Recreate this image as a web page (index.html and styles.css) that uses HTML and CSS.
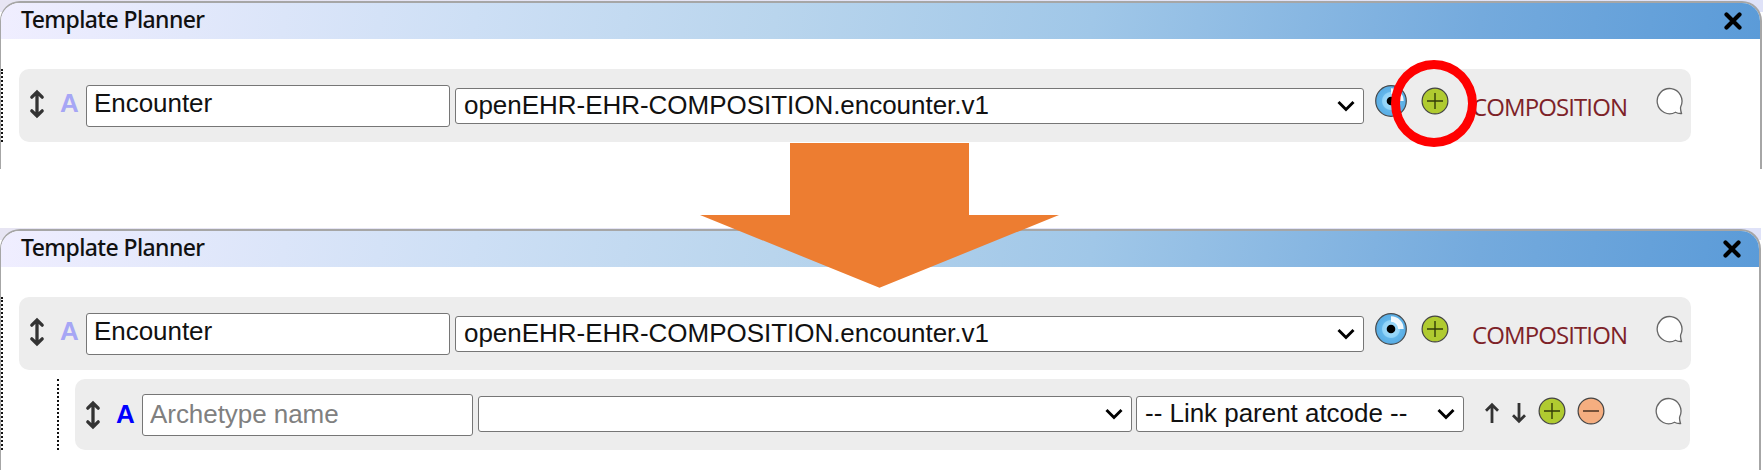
FILE: index.html
```html
<!DOCTYPE html>
<html lang="en">
<head>
<meta charset="utf-8">
<title>Template Planner</title>
<link rel="stylesheet" href="styles.css">
</head>
<body>
<svg class="defs" width="0" height="0">
  <defs>
    <radialGradient id="iris">
      <stop offset="0" stop-color="#a9e0fb"/><stop offset=".55" stop-color="#8fd3f8"/>
      <stop offset=".62" stop-color="#62b6ea"/><stop offset="1" stop-color="#58ace4"/>
    </radialGradient>
    <symbol id="move" viewBox="0 0 16 30"><path d="M8 4V26M2.800 8.200 8 3l5.200 5.200M2.800 21.800 8 27l5.200-5.200" fill="none" stroke="#333" stroke-width="3.300" stroke-linecap="round"/></symbol>
    <symbol id="chevron" viewBox="0 0 18 12"><path d="M1.500 2 9 9.500 16.500 2" fill="none" stroke="#000" stroke-width="2.900"/></symbol>
    <symbol id="eye" viewBox="0 0 34 34"><circle cx="17" cy="17" r="15.300" fill="url(#iris)" stroke="#45494c" stroke-width="1.200"/><path d="M17 4.300A12.700 12.700 0 0 1 29.700 17h-5.500A7.200 7.200 0 0 0 17 9.800Z" fill="#fff" opacity=".9"/><circle cx="17" cy="17" r="4.300"/></symbol>
    <symbol id="plus" viewBox="0 0 28 28"><circle cx="14" cy="14" r="12.900" fill="#b0cb30" stroke="#444" stroke-width="1.200"/><path d="M14 6v16M6 14h16" stroke="#333c08" stroke-width="1.400"/></symbol>
    <symbol id="minus" viewBox="0 0 28 28"><circle cx="14" cy="14" r="12.900" fill="#f5ae80" stroke="#444" stroke-width="1.200"/><path d="M6 14h16" stroke="#4a3020" stroke-width="1.500"/></symbol>
    <symbol id="bubble" viewBox="0 0 28 30"><path d="M19.500 26.200A12.400 12.600 0 1 1 24.800 20.500Q24 22.500 25.500 27.500 22 27.700 19.500 26.200Z" fill="#fff" stroke="#666" stroke-width="1.300"/></symbol>
    <symbol id="up" viewBox="0 0 16 22"><path d="M8 21V3M2 8.700 8 2.700l6 6" fill="none" stroke="#333" stroke-width="2.800"/></symbol>
    <symbol id="close" viewBox="0 0 18 18"><path d="M2.500 2.500l13 13M15.500 2.500l-13 13" stroke="#000" stroke-width="4.200" stroke-linecap="round"/></symbol>
  </defs>
</svg>

<main class="page">
  <section class="shot">
    <div class="panel">
      <header class="bar"><h1 class="title">Template Planner</h1><svg class="close"><use href="#close"/></svg></header>
      <div class="tree">
        <div class="row">
          <svg class="move"><use href="#move"/></svg>
          <span class="letter faded">A</span>
          <input class="name" value="Encounter">
          <div class="select wide"><span>openEHR-EHR-COMPOSITION.encounter.v1</span><svg class="chevron"><use href="#chevron"/></svg></div>
          <svg class="eye"><use href="#eye"/></svg>
          <svg class="plus"><use href="#plus"/></svg>
          <span class="kind">COMPOSITION</span>
          <svg class="bubble"><use href="#bubble"/></svg>
        </div>
      </div>
    </div>
  </section>

  <section class="shot second">
    <div class="panel">
      <header class="bar"><h1 class="title">Template Planner</h1><svg class="close"><use href="#close"/></svg></header>
      <div class="tree">
        <div class="row">
          <svg class="move"><use href="#move"/></svg>
          <span class="letter faded">A</span>
          <input class="name" value="Encounter">
          <div class="select wide"><span>openEHR-EHR-COMPOSITION.encounter.v1</span><svg class="chevron"><use href="#chevron"/></svg></div>
          <svg class="eye"><use href="#eye"/></svg>
          <svg class="plus"><use href="#plus"/></svg>
          <span class="kind">COMPOSITION</span>
          <svg class="bubble"><use href="#bubble"/></svg>
        </div>
        <div class="branch">
          <div class="row child">
            <svg class="move"><use href="#move"/></svg>
            <span class="letter">A</span>
            <input class="name" placeholder="Archetype name">
            <div class="select archetype"><svg class="chevron"><use href="#chevron"/></svg></div>
            <div class="select link"><span>-- Link parent atcode --</span><svg class="chevron"><use href="#chevron"/></svg></div>
            <svg class="arrow first"><use href="#up"/></svg>
            <svg class="arrow down"><use href="#up"/></svg>
            <svg class="plus"><use href="#plus"/></svg>
            <svg class="minus"><use href="#minus"/></svg>
            <svg class="bubble"><use href="#bubble"/></svg>
          </div>
        </div>
      </div>
    </div>
  </section>

  <svg class="flow-arrow" viewBox="0 0 360 145"><path d="M90 0H269V72H359L179.500 144.700 0 72H90Z" fill="#ed7d31"/></svg>
  <div class="ring"></div>
</main>
</body>
</html>
```

FILE: styles.css
```css
* { box-sizing: border-box; }
body { margin: 0; background: #fff; font-family: "Liberation Sans", Arial, sans-serif; }
svg { display: block; flex: none; }
.defs { position: absolute; }
.page { position: relative; width: 1763px; height: 470px; overflow: hidden; }

.shot { height: 169px; overflow: hidden; background: linear-gradient(90deg, #e7e5f3, #dfe2f8) 0 0 / 100% 12px no-repeat; padding-top: 1px; }
.shot.second { margin-top: 59px; height: 242px; width: 1761px; }
.panel { width: 1762px; height: 260px; border: 2px solid #a6a6a6; border-left-width: 1px; border-radius: 20px 20px 0 0; background: #fff; overflow: hidden; }
.second .panel { width: 1761px; }

.bar { height: 36px; display: flex; align-items: center; justify-content: space-between; padding: 0 18px 0 20px;
  background: linear-gradient(100deg, #f0eeff 0%, #cddff5 27%, #b9d5ed 44%, #a0c7e8 62%, #74aadd 84%, #5b9bd8 100%); }
.title { margin: 0 0 5px; font: 500 23px/30px "Noto Sans", sans-serif; letter-spacing: -.6px; color: #111; }
.close { width: 18px; height: 18px; }

.tree { margin-top: 30px; border-left: 2px dotted #111; }
.row { display: flex; align-items: flex-start; width: 1672px; height: 73px; margin-left: 16px; padding-left: 10px; border-radius: 10px; background: #ededed; }
.branch { margin: 9px 0 0 54px; border-left: 2px dotted #111; }
.row.child { width: 1615px; height: 71px; }

.move { width: 16px; height: 30px; margin-top: 20px; }
.letter { width: 19px; margin: 19px 0 0 15px; font-weight: bold; font-size: 26px; line-height: 30px; color: #00f; }
.faded { color: #a6a6f5; }
.name { width: 364px; height: 42px; margin: 16px 0 0 7px; padding: 0 7px 5px; border: 1.500px solid #767676; border-radius: 3px; background: #fff; color: #111; font: 26px/34px "Liberation Sans", Arial, sans-serif; letter-spacing: -.05px; }
.name::placeholder { color: #808080; }
.select { display: flex; align-items: center; justify-content: space-between; height: 36px; margin: 19px 0 0 5px; padding: 0 8px; border: 1.500px solid #767676; border-radius: 3px; background: #fff; color: #111; font-size: 26px; line-height: 32px; letter-spacing: -.03px; white-space: nowrap; }
.select span { margin-bottom: 2px; }
.wide { width: 909px; }
.chevron { width: 18px; height: 12px; margin-left: auto; }
.eye { width: 34px; height: 34px; margin: 15px 0 0 10px; }
.plus, .minus { width: 28px; height: 28px; margin: 18px 0 0 13px; }
.kind { width: 156px; margin: 22px 0 0 23px; font: 24px/32px "Open Sans", sans-serif; letter-spacing: -.9px; color: #7d2228; }
.bubble { width: 28px; height: 30px; margin: 17px 7px 0 auto; }

.child .move { margin-top: 21px; }
.child .letter { margin-top: 20px; }
.child .name { width: 331px; margin-top: 15px; padding-bottom: 2px; }
.child .select { margin-top: 17px; }
.child .archetype { width: 654px; }
.child .link { width: 328px; margin-left: 4px; }
.arrow { width: 16px; height: 22px; margin: 23px 0 0 11px; }
.arrow.first { margin-left: 20px; }
.arrow.down { transform: rotate(180deg); }
.child .plus { margin-left: 11px; }
.child .minus { margin-left: 11px; }
.child .plus, .child .minus { margin-top: 18px; }

/* Annotations drawn over the panels */
.flow-arrow { position: absolute; left: 700px; top: 143px; width: 360px; height: 145px; }
.ring { position: absolute; left: 1391px; top: 60px; width: 86px; height: 87px; border: 9px solid #f00; border-radius: 50%; }
```
